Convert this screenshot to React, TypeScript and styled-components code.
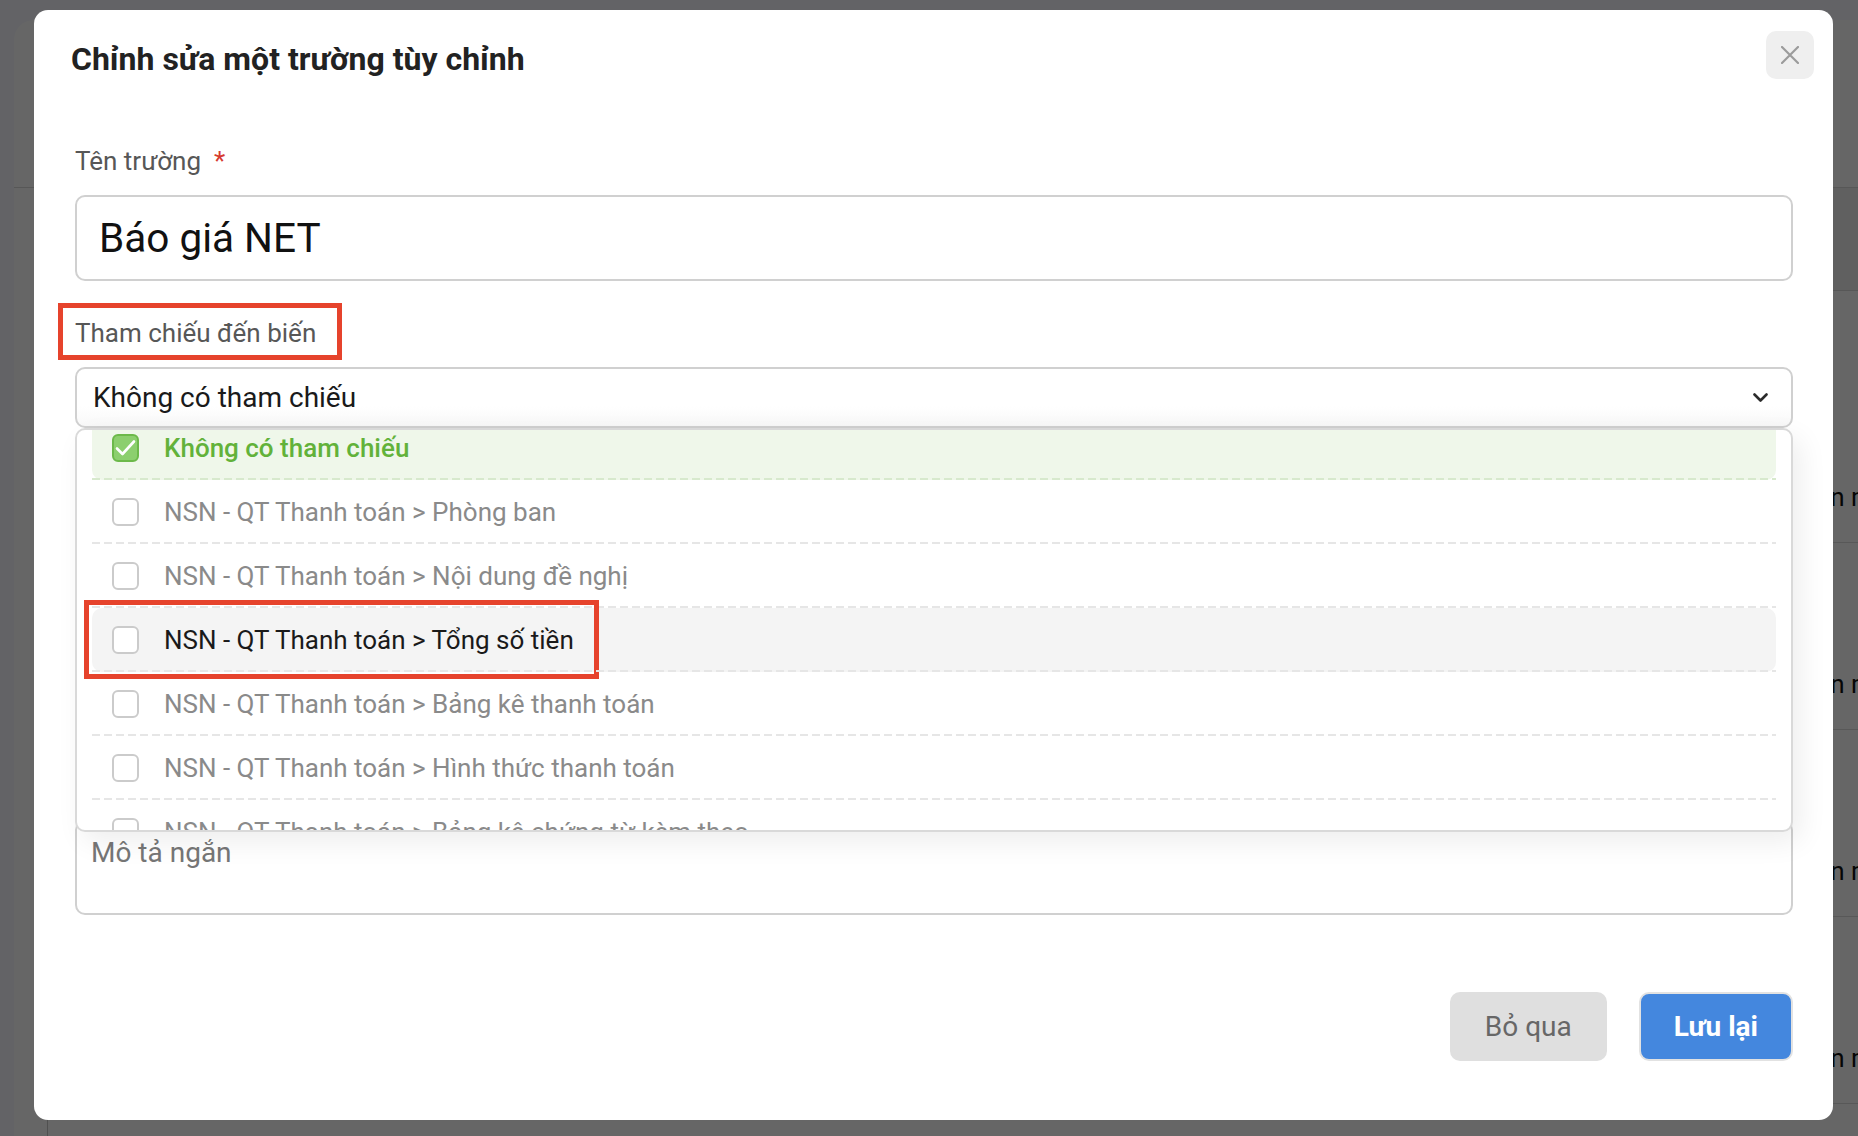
import { useState } from "react";
import styled, { createGlobalStyle, css } from "styled-components";

const GlobalStyle = createGlobalStyle`
  html, body, #root {
    margin: 0;
    padding: 0;
    height: 100%;
  }
  body {
    font-family: Roboto, "Noto Sans", "Liberation Sans", sans-serif;
    overflow: hidden;
  }
  * {
    box-sizing: border-box;
  }
`;

/* the list page sitting behind the dialog */
const Page = styled.div`
  position: fixed;
  inset: 0;
  display: flex;
  padding: 20px 0 0 14px;
  background: #f7f8ff;
`;

const Card = styled.div`
  flex: 1;
  display: flex;
  flex-direction: column;
  background: #fff;
  border-top-left-radius: 20px;
`;

const CardTop = styled.div`
  height: 168px;
  flex-shrink: 0;
  border-bottom: 1px solid #d9d9d9;
`;

const Table = styled.div`
  flex: 1;
  margin-left: 33px;
  border-left: 1px solid #c8c8c8;
`;

const HeadRow = styled.div`
  height: 103px;
  background: #f0f0f0;
  border-bottom: 1px solid #d9d9d9;
`;

const SubHead = styled.div`
  height: 65px;
`;

const BodyRow = styled.div`
  height: 187px;
  display: grid;
  grid-template-columns: 588px 1fr 110px;
  border-bottom: 1px solid #dcdcdc;
`;

const Cell = styled.div<{ $divider?: boolean }>`
  display: flex;
  align-items: flex-end;
  padding: 0 0 30px 45px;
  font-size: 26px;
  line-height: 30px;
  color: #111;
  white-space: nowrap;
  ${(p) =>
    p.$divider &&
    css`
      border-right: 1px solid #c8c8c8;
    `}
`;

/* dialog */
const Overlay = styled.div`
  position: fixed;
  inset: 0;
  display: flex;
  padding: 10px 25px 16px 34px;
  background: rgba(0, 0, 0, 0.6);
`;

const Dialog = styled.div`
  flex: 1;
  display: flex;
  flex-direction: column;
  background: #fff;
  border-radius: 14px;
`;

const Header = styled.div`
  display: flex;
  justify-content: space-between;
  align-items: flex-start;
  padding: 21px 19px 0 37px;
`;

const Title = styled.h2`
  margin: 9px 0 0;
  font-size: 32px;
  line-height: 38px;
  font-weight: 700;
  color: #222;
`;

const CloseButton = styled.button`
  width: 48px;
  height: 48px;
  padding: 0;
  border: none;
  border-radius: 10px;
  background: #efefef;
  display: flex;
  align-items: center;
  justify-content: center;
  cursor: pointer;
`;

const Body = styled.div`
  flex: 1;
  display: flex;
  flex-direction: column;
  gap: 37px;
  padding: 67px 40px 0 41px;
`;

const Field = styled.div<{ $push?: boolean }>`
  display: flex;
  flex-direction: column;
  gap: 19px;
  ${(p) =>
    p.$push &&
    css`
      margin-top: auto;
    `}
`;

const Label = styled.label`
  position: relative;
  align-self: flex-start;
  font-size: 26px;
  line-height: 30px;
  color: #575757;
`;

const Required = styled.span`
  margin-left: 13px;
  color: #d63a2f;
`;

const Mark = styled.span<{ $t: number; $r: number; $b: number; $l: number }>`
  position: absolute;
  top: ${(p) => p.$t}px;
  right: ${(p) => p.$r}px;
  bottom: ${(p) => p.$b}px;
  left: ${(p) => p.$l}px;
  border: 5px solid #e6432c;
  pointer-events: none;
`;

const TextInput = styled.input`
  width: 100%;
  height: 86px;
  padding: 0 22px;
  border: 2px solid #d0d0d0;
  border-radius: 10px;
  font-family: inherit;
  font-size: 40.5px;
  color: #111;
  background: #fff;
  outline: none;
`;

const SelectWrap = styled.div`
  position: relative;
`;

const SelectBox = styled.div`
  height: 61px;
  display: flex;
  align-items: center;
  justify-content: space-between;
  padding: 0 23px 0 16px;
  border: 2px solid #d0d0d0;
  border-radius: 10px;
  background: linear-gradient(#fff 65%, #f8f8f8);
  font-size: 28px;
  color: #1a1a1a;
  cursor: pointer;
`;

const Menu = styled.div`
  position: absolute;
  top: 100%;
  left: 0;
  right: 0;
  height: 404px;
  z-index: 2;
  overflow: hidden;
  background: #fff;
  border: 2px solid #d9d9d9;
  border-radius: 10px;
  box-shadow: 8px 10px 28px rgba(0, 0, 0, 0.07);
`;

const MenuList = styled.div`
  margin-top: -14px;
  padding: 0 15px;
`;

type Tone = "selected" | "active" | "idle";

const toneStyles = {
  selected: css`
    background: #eff7ea;
    color: #62b23a;
    font-weight: 500;
  `,
  active: css`
    background: #f4f4f4;
    color: #1a1a1a;
  `,
  idle: css`
    color: #8a8a8a;
  `,
};

const Option = styled.div<{ $tone: Tone }>`
  position: relative;
  height: 64px;
  display: flex;
  align-items: center;
  padding-left: 20px;
  border-radius: 10px;
  font-size: 26px;
  line-height: 30px;
  white-space: nowrap;
  cursor: pointer;
  ${(p) => toneStyles[p.$tone]}

  &::after {
    content: "";
    position: absolute;
    left: 0;
    right: 0;
    bottom: 0;
    height: 2px;
    background: repeating-linear-gradient(
      90deg,
      ${(p) => (p.$tone === "selected" ? "#d7e9cd" : "#e6e6e6")} 0 8px,
      transparent 8px 12px
    );
  }
`;

const OptionContent = styled.span`
  position: relative;
  display: inline-flex;
  align-items: center;
  gap: 25px;
`;

const Check = styled.span<{ $on: boolean }>`
  width: 27px;
  height: 28px;
  flex-shrink: 0;
  display: flex;
  align-items: center;
  justify-content: center;
  border-radius: 6px;
  border: 2px solid ${(p) => (p.$on ? "#6cb94a" : "#cbcbcb")};
  background: ${(p) => (p.$on ? "#8ccf6e" : "#fff")};
`;

const TextArea = styled.textarea`
  width: 100%;
  height: 95px;
  padding: 16px 14px;
  border: 2px solid #d0d0d0;
  border-radius: 10px;
  font-family: inherit;
  font-size: 28px;
  line-height: 30px;
  color: #111;
  resize: none;
  outline: none;

  &::placeholder {
    color: #767676;
  }
`;

const Footer = styled.div`
  display: flex;
  justify-content: flex-end;
  gap: 32px;
  padding: 77px 40px 59px;
`;

const Button = styled.button<{ $primary?: boolean }>`
  height: 69px;
  border-radius: 10px;
  font-family: inherit;
  font-size: 28px;
  cursor: pointer;
  ${(p) =>
    p.$primary
      ? css`
          padding: 0 33px;
          border: 2px solid #e2e2e2;
          background: #4487de;
          color: #fff;
          font-weight: 700;
        `
      : css`
          padding: 0 35px;
          border: none;
          background: #dfdfdf;
          color: #676767;
        `}
`;

const OPTIONS = [
  "Không có tham chiếu",
  "NSN - QT Thanh toán > Phòng ban",
  "NSN - QT Thanh toán > Nội dung đề nghị",
  "NSN - QT Thanh toán > Tổng số tiền",
  "NSN - QT Thanh toán > Bảng kê thanh toán",
  "NSN - QT Thanh toán > Hình thức thanh toán",
  "NSN - QT Thanh toán > Bảng kê chứng từ kèm theo",
];

const ROWS = ["toán mới", "toán mới", "toán mới", "toán mới"];

function ChevronDown() {
  return (
    <svg width="15" height="9" viewBox="0 0 15 9" fill="none">
      <polyline
        points="1.5,1.5 7.5,7.5 13.5,1.5"
        stroke="#2b2b2b"
        strokeWidth="2.6"
        strokeLinecap="round"
        strokeLinejoin="round"
      />
    </svg>
  );
}

function CloseIcon() {
  return (
    <svg width="18" height="18" viewBox="0 0 18 18" fill="none">
      <path d="M1 1L17 17M17 1L1 17" stroke="#9b9b9b" strokeWidth="2.2" strokeLinecap="round" />
    </svg>
  );
}

function Tick() {
  return (
    <svg width="21" height="18" viewBox="0 0 21 18" fill="none">
      <polyline
        points="2,9.5 7.5,15 19,2.5"
        stroke="#fff"
        strokeWidth="2.6"
        strokeLinecap="round"
        strokeLinejoin="round"
      />
    </svg>
  );
}

export default function App() {
  const [selected, setSelected] = useState(0);
  const hovered = 3;

  return (
    <>
      <GlobalStyle />
      <Page>
        <Card>
          <CardTop />
          <Table>
            <HeadRow />
            <SubHead />
            {ROWS.map((r, i) => (
              <BodyRow key={i}>
                <Cell $divider />
                <Cell />
                <Cell>{r}</Cell>
              </BodyRow>
            ))}
          </Table>
        </Card>
      </Page>

      <Overlay>
        <Dialog>
          <Header>
            <Title>Chỉnh sửa một trường tùy chỉnh</Title>
            <CloseButton aria-label="Đóng">
              <CloseIcon />
            </CloseButton>
          </Header>

          <Body>
            <Field>
              <Label>
                Tên trường<Required>*</Required>
              </Label>
              <TextInput defaultValue="Báo giá NET" />
            </Field>

            <Field>
              <Label>
                Tham chiếu đến biến
                <Mark $t={-15} $r={-26} $b={-12} $l={-17} />
              </Label>
              <SelectWrap>
                <SelectBox>
                  <span>{OPTIONS[selected]}</span>
                  <ChevronDown />
                </SelectBox>
                <Menu>
                  <MenuList>
                    {OPTIONS.map((o, i) => {
                      const tone: Tone = i === selected ? "selected" : i === hovered ? "active" : "idle";
                      return (
                        <Option key={o} $tone={tone} onClick={() => setSelected(i)}>
                          <OptionContent>
                            <Check $on={i === selected}>{i === selected && <Tick />}</Check>
                            {o}
                            {i === hovered && <Mark $t={-25} $r={-25} $b={-24} $l={-28} />}
                          </OptionContent>
                        </Option>
                      );
                    })}
                  </MenuList>
                </Menu>
              </SelectWrap>
            </Field>

            <Field $push>
              <TextArea placeholder="Mô tả ngắn" />
            </Field>
          </Body>

          <Footer>
            <Button>Bỏ qua</Button>
            <Button $primary>Lưu lại</Button>
          </Footer>
        </Dialog>
      </Overlay>
    </>
  );
}
